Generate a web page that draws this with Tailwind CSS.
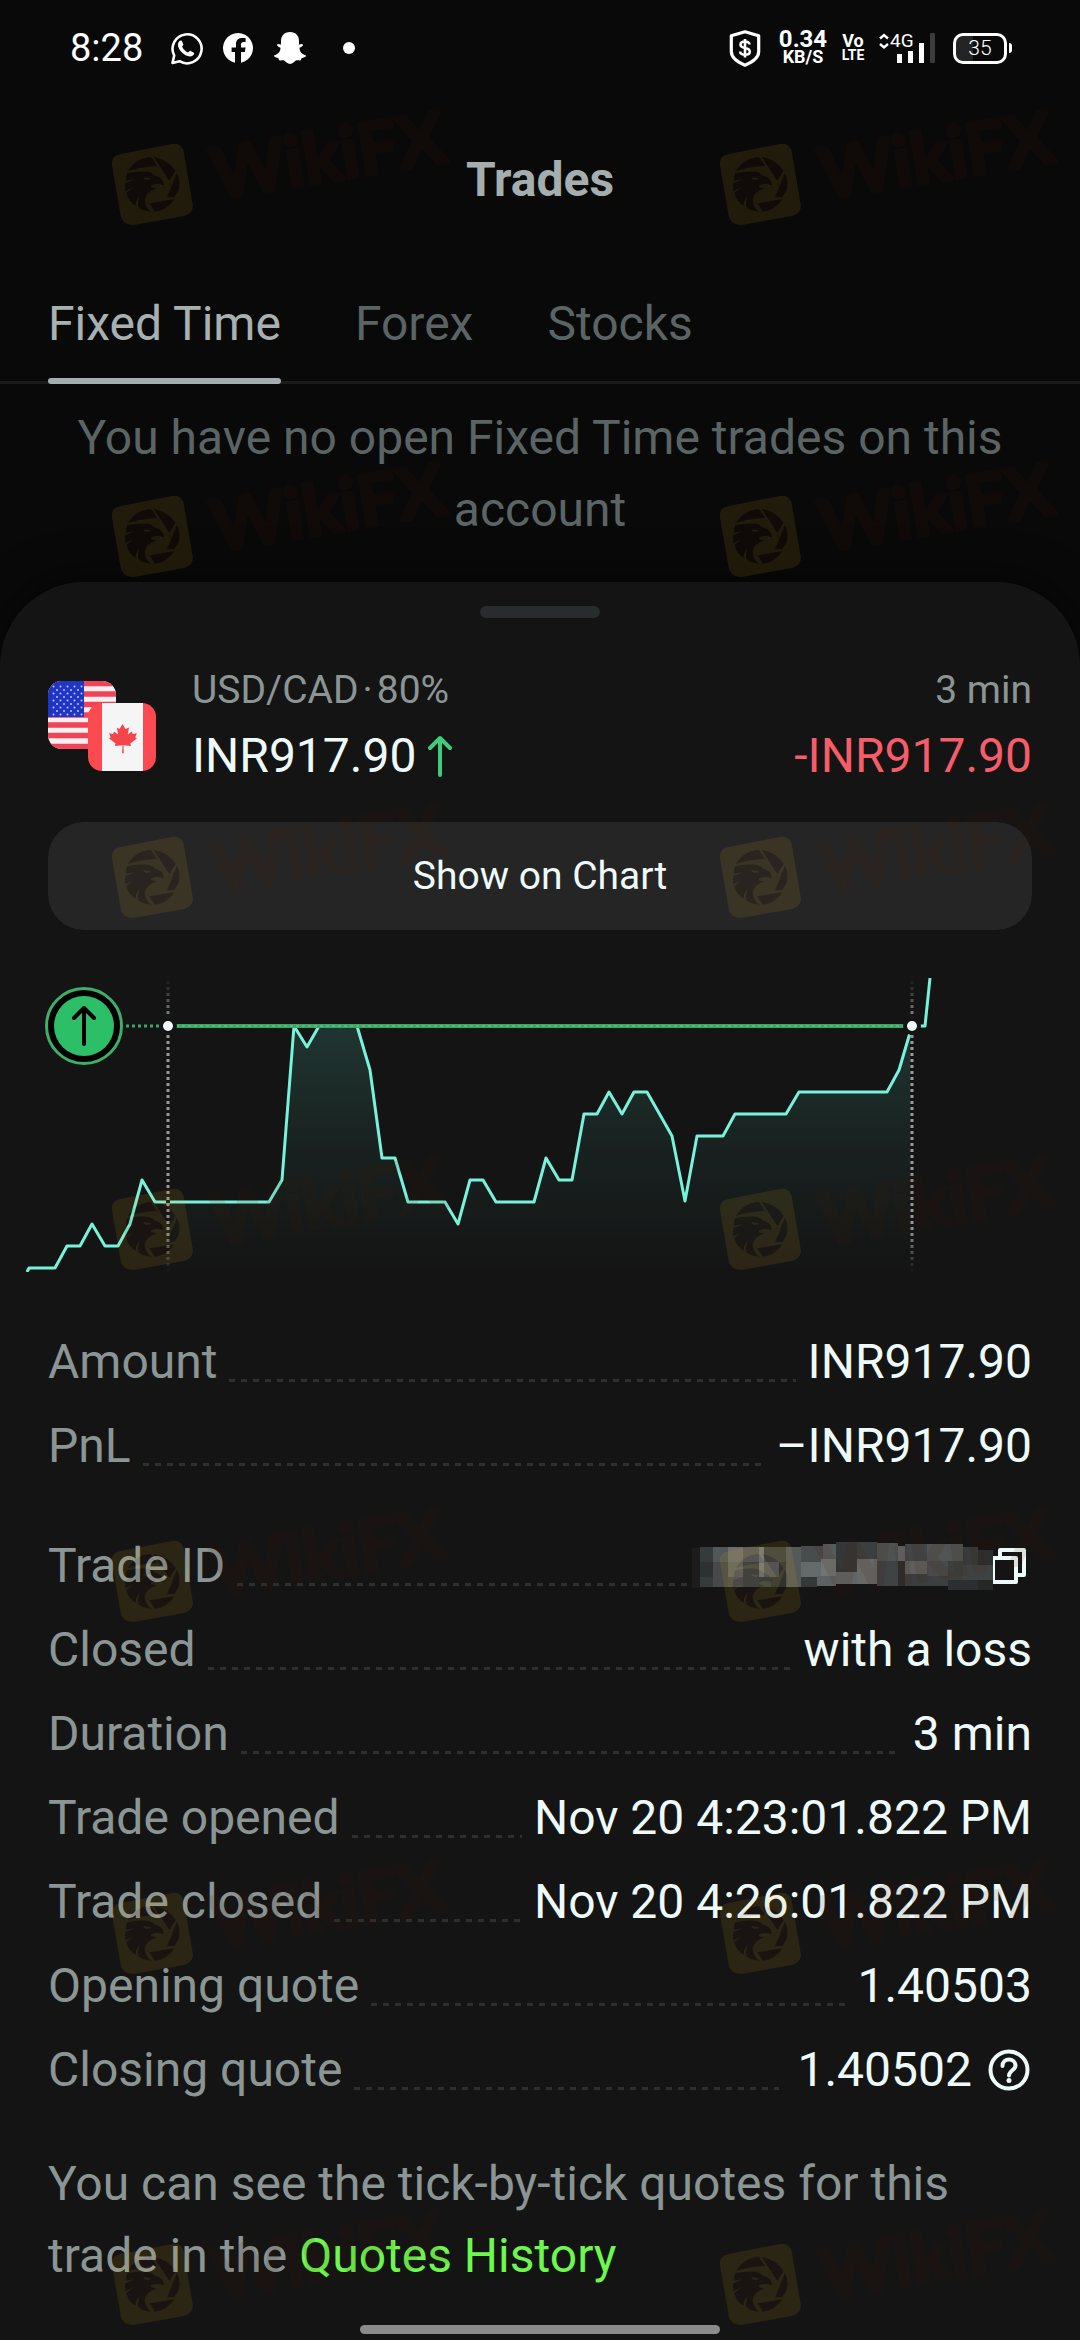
<!DOCTYPE html>
<html lang="en">
<head>
<meta charset="utf-8">
<meta name="viewport" content="width=device-width, initial-scale=1">
<title>Trades</title>
<script src="https://cdn.jsdelivr.net/npm/@tailwindcss/browser@4"></script>
</head>
<body class="bg-[#090909] font-['Roboto',sans-serif] text-[48px] leading-[72px] text-[#eefaf9]">
<div class="relative min-h-screen overflow-hidden">

  <!-- Status bar -->
  <div class="flex h-24 items-center justify-between pl-[70px] pr-[68px] text-white">
    <div class="flex items-center">
      <span class="w-[100px] text-[38px] leading-[48px]">8:28</span>
      <svg class="h-[33px] w-[33px]" viewBox="0 0 33 33" fill="none"><path d="M2.5 31l1.700-7.500A14.500 14.500 0 1 1 9.500 29.200z" stroke="#fff" stroke-width="2.600" stroke-linejoin="round"/><path d="M9 9.500c1.500-1.500 2.700-1 3.300.4l1 2.400c.3.900-.9 1.800-1.100 2.500.9 2.400 3.200 4.600 5.800 5.600.8-.2 1.700-1.800 2.600-1.500l3 1.600c1.200.7.5 2.200-.8 3.100-3.200 2.200-8.200-.3-11.300-3.600C8.400 17 6.800 12.400 9 9.500z" fill="#fff"/></svg>
      <svg class="ml-5 h-[30px] w-[30px]" viewBox="0 0 30 30"><path d="M12 29.700A15 15 0 1 1 18 29.700V19h3.800l.8-4.500H18v-3c0-1.500.8-2.600 2.600-2.600h2V5.200c-5.800-1-9.600.8-9.600 5.800v3.500H8.600V19H12z" fill="#fff"/></svg>
      <svg class="ml-[21px] h-8 w-8" viewBox="0 0 32 32"><path d="M16 0c6 0 9 4 9 9v3.500c1 .5 2.500-.8 3.500-.3 1.500 1.300-1 2.600-3 3.600 0 4 2.500 6.500 6.500 7.800.3 1.600-2.500 2-4.500 2.600-.4 1-.2 2-1.500 2.200-1.500.1-3-.5-4.500.4C20 29.900 18.500 32 16 32s-4-2.100-5.500-3.200c-1.500-.9-3-.3-4.500-.4-1.300-.2-1.100-1.200-1.500-2.200-2-.6-4.800-1-4.500-2.600 4-1.300 6.500-3.800 6.500-7.800-2-1-4.500-2.300-3-3.600 1-.5 2.500.8 3.500.3V9c0-5 3-9 9-9z" fill="#fff"/></svg>
      <span class="ml-[37px] h-3 w-3 rounded-full bg-white"></span>
    </div>
    <div class="flex items-center">
      <svg class="h-[37px] w-8" viewBox="0 0 32 37" fill="none" stroke="#fff"><path d="M16 1.800l13.700 4v15.700c0 6.500-6 10.500-13.700 13.700C8.300 32 2.300 28 2.300 21.500V5.800z" stroke-width="3.200" stroke-linejoin="round"/><path d="M20.500 14.500c0-2-2-3-4.500-3s-4.500 1-4.500 3.200c0 4.600 9.300 2.200 9.300 6.800 0 2.300-2.300 3.300-4.800 3.300s-4.800-1-4.800-3.300M16 9v18.500" stroke-width="2.600"/></svg>
      <div class="ml-4 flex w-[52px] flex-col items-center font-bold">
        <span class="text-[24px] leading-[18px]">0.34</span>
        <span class="text-[18px] leading-[18px]">KB/S</span>
      </div>
      <div class="ml-3 flex w-[24px] flex-col items-center text-[14px] leading-[15px] font-bold">
        <span class="text-[18px]">Vo</span>
        <span>LTE</span>
      </div>
      <div class="relative ml-3.5 h-[30px] w-14">
        <span class="absolute left-[11px] -top-0.5 text-[19px] leading-5">4G</span>
        <svg class="h-[30px] w-14" viewBox="0 0 56 30"><path d="M1 5.500L5 2l4 3.500M1 11l4 3.500L9 11" fill="none" stroke="#fff" stroke-width="2.400"/><path d="M18 21h5v9h-5zM29 18h5v12h-5zM40 10h5v20h-5z" fill="#fff"/><rect x="51" width="5" height="30" rx="1" fill="#3b3b3b"/></svg>
      </div>
      <div class="relative ml-[18px] flex h-[31px] w-[54px] items-center justify-center overflow-hidden rounded-[10px] border-[3px] border-white bg-linear-to-r from-[#242424] from-35% to-transparent to-35% text-[21px] leading-6 font-light">35</div>
      <span class="ml-0.5 h-2.5 w-[3px] rounded-r bg-white"></span>
    </div>
  </div>

  <header class="flex h-42 items-center justify-center">
    <h1 class="font-bold text-[#a5aeae]">Trades</h1>
  </header>

  <nav class="flex gap-[74px] border-b-[3px] border-[#1b1b1b] px-12 pt-6 text-[#5b6464]">
    <a href="#" class="relative pb-[21px] text-[#a8b1b1]">Fixed Time<span class="absolute inset-x-0 -bottom-[3px] h-1.5 rounded-full bg-[#a5aeae]"></span></a>
    <a href="#" class="pb-[21px]">Forex</a>
    <a href="#" class="pb-[21px]">Stocks</a>
  </nav>

  <p class="px-12 pt-[18px] pb-9 text-center text-[#5b6464]">You have no open Fixed Time trades on this account</p>

  <main class="rounded-t-[84px] bg-[#141414] pt-6 pb-1.5 shadow-[0_-6px_40px_rgba(0,0,0,0.5)]">
    <div class="mx-auto h-3 w-30 rounded-full bg-[#282c2d]"></div>

    <section class="mt-[42px] flex items-center px-12">
      <svg class="mr-9 h-[90px] w-[108px]" viewBox="0 0 108 90">
        <defs>
          <clipPath id="us"><rect width="68" height="68" rx="14"/></clipPath>
          <clipPath id="ca"><rect x="40" y="22" width="68" height="68" rx="14"/></clipPath>
          <pattern id="stars" width="7" height="7" patternUnits="userSpaceOnUse"><circle cx="2" cy="2" r="1" fill="#b9c6ff"/><circle cx="5.500" cy="5.500" r="1" fill="#b9c6ff"/></pattern>
        </defs>
        <g clip-path="url(#us)">
          <rect width="68" height="68" fill="#ffeef0"/>
          <path d="M0 2.500h68M0 13h68M0 23.500h68M0 34h68M0 44h68M0 54.500h68M0 65.500h68" stroke="#ee4458" stroke-width="5.400"/>
          <rect width="36" height="36" fill="#1f35c4"/><rect x="3" y="3" width="32" height="32" fill="url(#stars)"/>
        </g>
        <g clip-path="url(#ca)">
          <rect x="40" y="22" width="68" height="68" fill="#fb4a50"/><rect x="54" y="22" width="41" height="68" fill="#f5f5f5"/>
          <path d="M74.500 43l3 5 3.500-1.500-1.200 7 4-3 1 2.500 4-.8-1.500 4 1.500 1.300-6.500 5 .8 2.500-7.700-.8.400 8h-1.700l.4-8-7.700.8.800-2.500-6.500-5 1.500-1.300-1.500-4 4 .8 1-2.500 4 3-1.200-7L71.500 48z" fill="#f4454c"/>
        </g>
      </svg>
      <div class="flex-1">
        <div class="flex gap-1 text-[39px] leading-[60px] text-[#8b9594]"><span>USD/CAD</span><span>·</span><span>80%</span></div>
        <div class="flex items-center gap-3">INR917.90
          <svg class="h-[42px] w-6" viewBox="0 0 24 42" fill="none" stroke="#3ecb7a" stroke-width="4" stroke-linecap="round" stroke-linejoin="round"><path d="M12 40V3M2 13L12 3l10 10"/></svg>
        </div>
      </div>
      <div class="text-right">
        <div class="text-[39px] leading-[60px] text-[#8b9594]">3 min</div>
        <div class="text-[#f75c69]">-INR917.90</div>
      </div>
    </section>

    <div class="mt-[30px] px-12">
      <button type="button" class="h-27 w-full rounded-[36px] bg-[#252525] text-[39px] leading-[60px]">Show on Chart</button>
    </div>

    <svg class="mt-12 w-full" viewBox="0 0 1080 294" fill="none" role="img" aria-label="Price during the trade">
      <defs>
        <linearGradient id="area" x1="0" y1="48" x2="0" y2="294" gradientUnits="userSpaceOnUse"><stop stop-color="#5ff0d8" stop-opacity=".15"/><stop offset=".5" stop-color="#5ff0d8" stop-opacity=".06"/><stop offset="1" stop-color="#5ff0d8" stop-opacity="0"/></linearGradient>
        <linearGradient id="fade" x1="0" y1="0" x2="0" y2="294" gradientUnits="userSpaceOnUse"><stop stop-color="#9a9a9a" stop-opacity="0"/><stop offset=".16" stop-color="#9a9a9a"/><stop offset=".85" stop-color="#9a9a9a"/><stop offset="1" stop-color="#9a9a9a" stop-opacity="0"/></linearGradient>
      </defs>
      <path fill="url(#area)" d="M168 294V224H269L282 202L294 48L307 69L319 48H357L370 92L382 180H395L408 224H445L458 246L470 202H483L496 224H534L546 180L559 202H572L584 136H597L609 114L622 136L634 114H647L672 158L685 223L697 158H723L735 136H786L799 114H887L899 92L912 48V294Z"/>
      <path stroke="#78f3db" stroke-width="3" stroke-linejoin="round" d="M27 294L29 290H55L67 268H80L92 246L105 268H118L130 246L142 202L155 224H269L282 202L294 48L307 69L319 48H357L370 92L382 180H395L408 224H445L458 246L470 202H483L496 224H534L546 180L559 202H572L584 136H597L609 114L622 136L634 114H647L672 158L685 223L697 158H723L735 136H786L799 114H887L899 92L912 48H925L930 0"/>
      <path d="M176 48H905" stroke="#3aa564" stroke-width="4"/>
      <path d="M176 48H905" stroke="#56b87b" stroke-width="2" stroke-dasharray="3 3"/>
      <path d="M126 48H162" stroke="#3aa564" stroke-width="3" stroke-dasharray="3 3"/>
      <path d="M166.500 0h3v294h-3zM910.500 0h3v294h-3z" fill="url(#fade)"/>
      <path d="M168 0V294M912 0V294" stroke="#141414" stroke-width="4" stroke-dasharray="3 3"/>
      <g fill="#f2fbfb" stroke="#141414" stroke-width="4"><circle cx="168" cy="48" r="7"/><circle cx="912" cy="48" r="7"/></g>
      <circle cx="84" cy="48" r="37.500" fill="#000" stroke="#3eae6b" stroke-width="3"/>
      <circle cx="84" cy="48" r="30" fill="#2cbf68"/>
      <path d="M84 66V30M74 40L84 30L94 40" stroke="#000" stroke-width="4" stroke-linecap="round" stroke-linejoin="round"/>
    </svg>

    <dl class="mt-12 px-12 leading-[84px]">
      <div class="flex gap-3"><dt class="text-[#8b9594]">Amount</dt><span class="mb-[22px] h-[3px] flex-1 self-end bg-[repeating-linear-gradient(90deg,#2d2f2f_0_6px,transparent_6px_12px)]"></span><dd>INR917.90</dd></div>
      <div class="flex gap-3"><dt class="text-[#8b9594]">PnL</dt><span class="mb-[22px] h-[3px] flex-1 self-end bg-[repeating-linear-gradient(90deg,#2d2f2f_0_6px,transparent_6px_12px)]"></span><dd>–INR917.90</dd></div>
      <div class="mt-9 flex gap-3"><dt class="text-[#8b9594]">Trade ID</dt><span class="mb-[22px] h-[3px] flex-1 self-end bg-[repeating-linear-gradient(90deg,#2d2f2f_0_6px,transparent_6px_12px)]"></span>
        <dd class="-ml-2 flex h-21 items-center pr-1.5">
          <svg class="h-[50px] w-[301px]" viewBox="440 690 875 150" preserveAspectRatio="none" shape-rendering="crispEdges" aria-label="Hidden">
            <path fill="#1c1c1c" d="M440 711h22v119h-22z"/>
            <path fill="#363a3a" d="M462 708h40v45h-40zM462 798h40v30h-40z"/><path fill="#2e3131" d="M462 753h40v45h-40z"/>
            <path fill="#515656" d="M502 708h44v45h-44z"/><path fill="#474949" d="M502 753h44v75h-44z"/>
            <path fill="#6c6e6b" d="M546 708h43v45h-43z"/><path fill="#626560" d="M546 753h43v45h-43z"/><path fill="#4d4f4f" d="M546 798h43v30h-43z"/>
            <path fill="#565a5b" d="M589 708h47v45h-47zM650 753h44v45h-44z"/><path fill="#424646" d="M589 753h47v75h-47z"/>
            <path fill="#747776" d="M636 708h14v90h-14z"/><path fill="#3d4141" d="M650 708h64v45h-64zM636 798h34v30h-34z"/>
            <path fill="#303434" d="M670 798h44v30h-44zM694 753h20v45h-20z"/><path fill="#565959" d="M714 708h44v120h-44z"/>
            <path fill="#484c4d" d="M758 705h64v48h-64z"/><path fill="#656a6b" d="M758 753h56v45h-56z"/><path fill="#343839" d="M758 798h44v30h-44z"/>
            <path fill="#565a5b" d="M822 699h37v45h-37z"/><path fill="#717474" d="M814 744h45v50h-45z"/><path fill="#5d6162" d="M802 794h57v32h-57z"/>
            <path fill="#343637" d="M859 693h60v90h-60z"/><path fill="#626667" d="M859 783h60v36h-60z"/>
            <path fill="#3c3f40" d="M919 693h60v50h-60z"/><path fill="#676868" d="M919 743h60v75h-60z"/>
            <path fill="#4e5253" d="M979 696h61v55h-61z"/><path fill="#3f4344" d="M979 751h61v74h-61z"/>
            <path fill="#626667" d="M1040 705h20v45h-20z"/><path fill="#2b2d2d" d="M1040 750h20v75h-20z"/>
            <path fill="#434647" d="M1060 699h64v51h-64z"/><path fill="#5d5f5f" d="M1060 750h64v40h-64z"/><path fill="#3b3e3e" d="M1060 790h64v34h-64z"/>
            <path fill="#505454" d="M1124 699h104v51h-104z"/><path fill="#484b4b" d="M1124 750h61v45h-61z"/><path fill="#3c3f3f" d="M1124 795h61v30h-61zM1185 750h43v57h-43z"/>
            <path fill="#383b3b" d="M1228 708h44v55h-44z"/><path fill="#2c2f2f" d="M1272 717h43v45h-43zM1185 807h87v30h-87z"/><path fill="#3f4242" d="M1228 763h87v44h-87z"/><path fill="#262828" d="M1272 807h43v30h-43z"/>
          </svg>
          <button type="button" aria-label="Copy trade ID" class="h-9 w-[33px]"><svg class="h-9 w-[33px]" viewBox="0 0 33 36" fill="none" stroke="#eefaf9" stroke-width="4" stroke-linejoin="round"><path d="M7 9V2h24v25h-6"/><path d="M0 10h23v24H0"/><path d="M1 8v28" stroke-width="2"/></svg></button>
        </dd></div>
      <div class="flex gap-3"><dt class="text-[#8b9594]">Closed</dt><span class="mb-[22px] h-[3px] flex-1 self-end bg-[repeating-linear-gradient(90deg,#2d2f2f_0_6px,transparent_6px_12px)]"></span><dd>with a loss</dd></div>
      <div class="flex gap-3"><dt class="text-[#8b9594]">Duration</dt><span class="mb-[22px] h-[3px] flex-1 self-end bg-[repeating-linear-gradient(90deg,#2d2f2f_0_6px,transparent_6px_12px)]"></span><dd>3 min</dd></div>
      <div class="flex gap-3"><dt class="text-[#8b9594]">Trade opened</dt><span class="mb-[22px] h-[3px] flex-1 self-end bg-[repeating-linear-gradient(90deg,#2d2f2f_0_6px,transparent_6px_12px)]"></span><dd>Nov 20 4:23:01.822 PM</dd></div>
      <div class="flex gap-3"><dt class="text-[#8b9594]">Trade closed</dt><span class="mb-[22px] h-[3px] flex-1 self-end bg-[repeating-linear-gradient(90deg,#2d2f2f_0_6px,transparent_6px_12px)]"></span><dd>Nov 20 4:26:01.822 PM</dd></div>
      <div class="flex gap-3"><dt class="text-[#8b9594]">Opening quote</dt><span class="mb-[22px] h-[3px] flex-1 self-end bg-[repeating-linear-gradient(90deg,#2d2f2f_0_6px,transparent_6px_12px)]"></span><dd>1.40503</dd></div>
      <div class="flex gap-3"><dt class="text-[#8b9594]">Closing quote</dt><span class="mb-[22px] h-[3px] flex-1 self-end bg-[repeating-linear-gradient(90deg,#2d2f2f_0_6px,transparent_6px_12px)]"></span>
        <dd class="flex items-center gap-4 pl-1.5">1.40502
          <button type="button" aria-label="About the closing quote" class="mr-0.5 h-[42px] w-[42px]"><svg class="h-[42px] w-[42px]" viewBox="0 0 42 42" fill="none" stroke="#eefaf9" stroke-width="4"><circle cx="21" cy="21" r="18.500"/><path d="M14.500 17c0-4 3-6.500 6.500-6.500s6.500 2.500 6.500 6c0 4.500-6.500 5-6.500 10" stroke-linecap="round"/><circle cx="21" cy="31.500" r="2.500" fill="#eefaf9" stroke="none"/></svg></button>
        </dd></div>
    </dl>

    <p class="mt-9 px-12 text-[#8b9594]">You can see the tick-by-tick quotes for this trade in the <a href="#" class="text-[#6cf84c]">Quotes History</a></p>
    <div class="mx-auto mt-[33px] h-[9px] w-90 rounded-full bg-[#8c8c8c]"></div>
  </main>

  <!-- Watermark layer -->
  <svg class="pointer-events-none absolute inset-x-0 top-0 w-full" viewBox="0 0 1080 2340" aria-hidden="true">
    <defs>
      <g id="mark">
        <g transform="scale(.3444 .3333)">
          <g opacity=".107">
            <path fill="#e9b11c" d="M350 462L500 432Q528 428 534 458L560 615Q562 640 535 648L388 675Q358 676 351 650L325 495Q322 468 350 462Z"/>
            <g fill="#4a1c00">
              <path d="M372 513Q392 474 438 471L456 498Q412 500 372 513Z"/>
              <path d="M446 471Q488 478 510 513L492 543Z"/>
              <path d="M514 518Q532 560 506 591L485 592Z"/>
              <path d="M434 610L506 598Q485 632 450 635Z"/>
              <path d="M370 519Q400 513 430 515Q446 520 448 526Q474 532 476 556Q455 548 440 556Q432 562 454 566Q424 574 420 600Q422 622 438 635Q415 633 402 622Q398 605 406 588Q390 605 396 618Q372 606 367 578L388 562L364 574Q361 560 364 550L392 538L366 542Q364 530 370 519Z"/>
            </g>
            <path fill="#e9b11c" d="M416 532L440 535Q430 545 418 536ZM440 556Q455 550 474 558L454 563Z"/>
          </g>
        </g>
        <text transform="translate(216 200) rotate(-9.500)" font-family="Lato, sans-serif" font-weight="700" font-size="71" fill="#4a1c00" stroke="#4a1c00" stroke-width="4" stroke-linejoin="round" opacity=".107">WikiFX</text>
      </g>
    </defs>
    <use href="#mark"/><use href="#mark" x="608"/>
    <use href="#mark" y="352"/><use href="#mark" x="608" y="352"/>
    <use href="#mark" y="693"/><use href="#mark" x="608" y="693"/>
    <use href="#mark" y="1045"/><use href="#mark" x="608" y="1045"/>
    <use href="#mark" y="1397"/><use href="#mark" x="608" y="1397"/>
    <use href="#mark" y="1749"/><use href="#mark" x="608" y="1749"/>
    <use href="#mark" y="2100"/><use href="#mark" x="608" y="2100"/>
  </svg>
</div>
</body>
</html>
